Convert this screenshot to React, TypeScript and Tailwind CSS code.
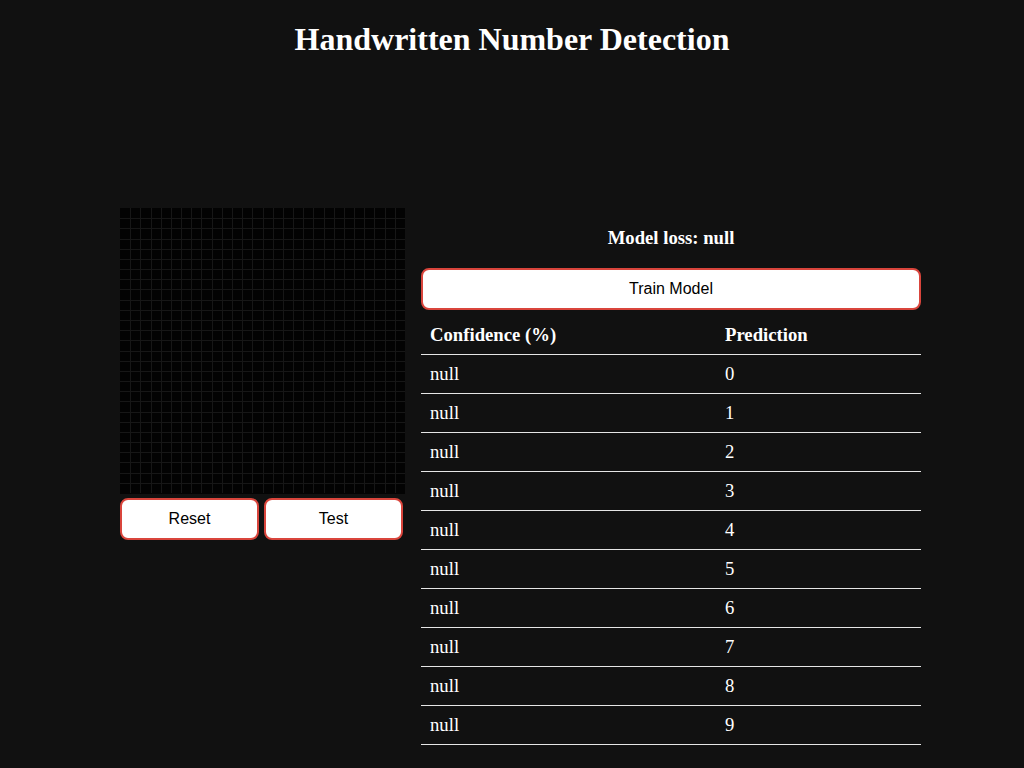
const rows = [0, 1, 2, 3, 4, 5, 6, 7, 8, 9]

const GridCanvas = () => {
  const cells = 28
  const size = 285
  const step = size / cells
  const lines = []
  for (let i = 1; i < cells; i++) {
    const p = Math.round(i * step) + 0.5
    lines.push(<line key={"v" + i} x1={p} y1={0} x2={p} y2={size} stroke="#171717" strokeWidth={1} />)
    lines.push(<line key={"h" + i} x1={0} y1={p} x2={size} y2={p} stroke="#171717" strokeWidth={1} />)
  }
  return (
    <svg width={size} height={286} className="block bg-[#030303]">
      {lines}
    </svg>
  )
}

const App = () => {
  return (
    <div className="min-h-[768px] bg-[#111111] text-white font-['Liberation_Serif',serif]">
      <h1 className="pt-[21px] text-center text-[32px] font-bold leading-[37px]">
        Handwritten Number Detection
      </h1>

      <div className="mt-[150px] flex items-start pl-[120px]">
        {/* Drawing area */}
        <div className="w-[285px]">
          <GridCanvas />
          <div className="mt-[4px] flex gap-[5px] font-['Liberation_Sans',sans-serif]">
            <button className="h-[42px] w-[139px] rounded-[8px] border-2 border-[#d9453c] bg-white text-[16px] text-black">
              Reset
            </button>
            <button className="h-[42px] w-[139px] rounded-[8px] border-2 border-[#d9453c] bg-white text-[16px] text-black">
              Test
            </button>
          </div>
        </div>

        {/* Model side */}
        <div className="ml-[16px] w-[500px] pt-[18px]">
          <h3 className="text-center text-[18.7px] font-bold leading-[24px]">Model loss: null</h3>
          <button className="mt-[18px] h-[42px] w-full rounded-[8px] border-2 border-[#d9453c] bg-white font-['Liberation_Sans',sans-serif] text-[16px] text-black">
            Train Model
          </button>
          <table className="mt-[5px] w-full border-collapse text-left">
            <thead>
              <tr className="h-[39px] border-b border-[#e6e6e6]">
                <th className="w-[295px] pl-[9px] pt-[2px] text-[18.7px] font-bold">Confidence (%)</th>
                <th className="pl-[9px] pt-[2px] text-[18.7px] font-bold">Prediction</th>
              </tr>
            </thead>
            <tbody>
              {rows.map((n) => (
                <tr key={n} className="h-[39px] border-b border-[#e6e6e6]">
                  <td className="pl-[9px] pt-[2px] text-[18.7px]">null</td>
                  <td className="pl-[9px] pt-[2px] text-[18.7px]">{n}</td>
                </tr>
              ))}
            </tbody>
          </table>
        </div>
      </div>
    </div>
  )
}

export default App
